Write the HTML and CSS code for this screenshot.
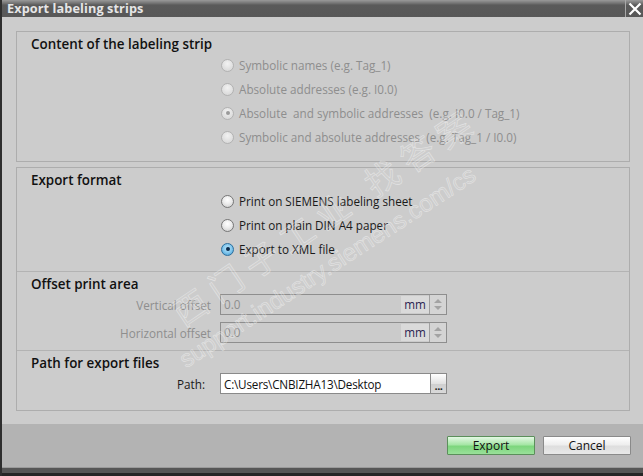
FILE: index.html
```html
<!DOCTYPE html>
<html>
<head>
<meta charset="utf-8">
<link rel="stylesheet" href="styles.css">
</head>
<body>
<div class="window">
  <div class="titlebar">
    <span class="title">Export labeling strips</span>
    <div class="close">
      <svg width="14" height="14" viewBox="0 0 14 14"><path d="M1.5 1.5 L12.5 12.5 M12.5 1.5 L1.5 12.5" stroke="#ffffff" stroke-width="2.2" fill="none"/></svg>
    </div>
  </div>
  <div class="content">
    <div class="group g1">
      <div class="heading">Content of the labeling strip</div>
      <div class="options">
        <div class="opt disabled"><span class="radio"></span><span>Symbolic names (e.g. Tag_1)</span></div>
        <div class="opt disabled"><span class="radio"></span><span>Absolute addresses (e.g. I0.0)</span></div>
        <div class="opt disabled"><span class="radio checked"></span><span>Absolute&nbsp; and symbolic addresses&nbsp; (e.g. I0.0 / Tag_1)</span></div>
        <div class="opt disabled"><span class="radio"></span><span>Symbolic and absolute addresses&nbsp; (e.g. Tag_1 / I0.0)</span></div>
      </div>
    </div>
    <div class="group g2">
      <div class="sec sec-format">
        <div class="heading">Export format</div>
        <div class="options">
          <div class="opt"><span class="radio"></span><span>Print on SIEMENS labeling sheet</span></div>
          <div class="opt"><span class="radio"></span><span>Print on plain DIN A4 paper</span></div>
          <div class="opt"><span class="radio checked"></span><span>Export to XML file</span></div>
        </div>
      </div>
      <div class="sec sec-offset">
        <div class="heading">Offset print area</div>
        <div class="field-row">
          <span class="label disabled-text">Vertical offset</span>
          <div class="spinfield">
            <span class="value">0.0</span>
            <span class="unit">mm</span>
            <span class="spin"><span class="up"></span><span class="down"></span></span>
          </div>
        </div>
        <div class="field-row">
          <span class="label disabled-text">Horizontal offset</span>
          <div class="spinfield">
            <span class="value">0.0</span>
            <span class="unit">mm</span>
            <span class="spin"><span class="up"></span><span class="down"></span></span>
          </div>
        </div>
      </div>
      <div class="sec sec-path">
        <div class="heading">Path for export files</div>
        <div class="field-row">
          <span class="label path-label">Path:</span>
          <div class="pathfield"><span class="value">C:\Users\CNBIZHA13\Desktop</span></div>
          <span class="browse">...</span>
        </div>
      </div>
    </div>
  </div>
  <div class="footer">
    <button class="btn btn-export">Export</button>
    <button class="btn btn-cancel">Cancel</button>
  </div>
  <div class="bottombar"></div>
  <div class="watermark wm-cn">西门子工业 找答案</div>
  <div class="watermark wm-url">support.industry.siemens.com/cs</div>
</div>
</body>
</html>
```

FILE: styles.css
```css
* { box-sizing: border-box; }
html, body { margin: 0; padding: 0; }
body {
  width: 643px;
  height: 476px;
  overflow: hidden;
  font-family: "Open Sans", "Noto Sans", sans-serif;
  background: #cccccc;
}
.window {
  position: relative;
  width: 643px;
  height: 476px;
  border-left: 2px solid #2e2e2e;
  display: flex;
  flex-direction: column;
  overflow: hidden;
}
.titlebar {
  height: 17px;
  background: linear-gradient(#9a9a9a 0px, #6a6a6a 4px, #5a5a5a 5px, #585858 17px);
  display: flex;
  align-items: center;
  justify-content: space-between;
  padding-left: 5px;
}
.title {
  color: #e6e6e6;
  font-weight: 700;
  font-size: 12.7px;
  line-height: 17px;
  letter-spacing: 0.1px;
}
.close {
  width: 18px;
  height: 17px;
  border-left: 1px solid #a8a8a8;
  display: flex;
  align-items: center;
  justify-content: center;
  padding-left: 1px;
}
.content {
  background: #cccccc;
  height: 407px;
  padding: 14px 13px 0 14px;
  display: flex;
  flex-direction: column;
  gap: 5px;
}
.group {
  border: 1px solid #adadad;
}
.g1 {
  height: 131px;
  padding: 3px 0 0 0;
}
.g2 {
  height: 244px;
  display: flex;
  flex-direction: column;
}
.heading {
  font-size: 13.4px;
  font-weight: 600;
  color: #111;
  line-height: 18px;
  padding-left: 14px;
}
.options {
  margin-left: 204px;
  display: flex;
  flex-direction: column;
}
.opt {
  height: 24px;
  display: flex;
  align-items: center;
  gap: 5px;
  font-size: 11.7px;
  color: #1a1a1a;
  white-space: nowrap;
}
.opt.disabled { color: #8e8e8e; }
.radio {
  width: 13px;
  height: 13px;
  border-radius: 50%;
  border: 1px solid #777;
  background: radial-gradient(circle at 50% 35%, #ffffff 0%, #ececec 45%, #c8c8c8 100%);
  flex: none;
  position: relative;
}
.opt.disabled .radio {
  border-color: #b2b2b2;
  background: radial-gradient(circle at 50% 35%, #f2f2f2 0%, #e2e2e2 50%, #d2d2d2 100%);
}
.radio.checked {
  border-color: #2c6e9c;
  background: radial-gradient(circle at 50% 40%, #bfe6fa 0%, #7cc4ec 55%, #3a8fc8 100%);
}
.radio.checked::after {
  content: "";
  position: absolute;
  left: 3.5px;
  top: 3.5px;
  width: 4px;
  height: 4px;
  border-radius: 50%;
  background: #0b2a4a;
}
.opt.disabled .radio.checked {
  border-color: #b2b2b2;
  background: radial-gradient(circle at 50% 35%, #f2f2f2 0%, #e2e2e2 50%, #d2d2d2 100%);
}
.opt.disabled .radio.checked::after { background: #9a9a9a; }

.sec-format {
  height: 104px;
  padding-top: 3px;
  border-bottom: 1px solid #b3b3b3;
}
.sec-offset {
  height: 79px;
  padding-top: 3px;
  border-bottom: 1px solid #b3b3b3;
  display: flex;
  flex-direction: column;
}
.sec-offset .heading { margin-bottom: 1px; }
.sec-offset .field-row + .field-row { margin-top: 7px; }
.sec-path {
  flex: 1;
  padding-top: 3px;
  display: flex;
  flex-direction: column;
}
.sec-path .heading { margin-bottom: 1px; }
.field-row {
  display: flex;
  align-items: center;
  height: 21px;
}
.label {
  width: 194px;
  text-align: right;
  font-size: 11.7px;
  margin-right: 9px;
  white-space: nowrap;
  color: #1a1a1a;
}
.disabled-text { color: #8e8e8e; }
.path-label { padding-right: 6px; }
.spinfield {
  width: 227px;
  height: 21px;
  border: 1px solid #8e8e8e;
  background: #cbcbcb;
  display: flex;
  align-items: stretch;
}
.spinfield .value {
  flex: 1;
  font-size: 11.7px;
  color: #8e8e8e;
  padding-left: 3px;
  line-height: 19px;
}
.unit {
  width: 28px;
  background: #dadada;
  font-size: 11.7px;
  color: #2a2450;
  text-align: center;
  line-height: 17px;
  margin: 1px 0;
}
.spin {
  width: 17px;
  border-left: 1px solid #a0a0a0;
  background: #d4d4d4;
  display: flex;
  flex-direction: column;
  align-items: center;
  justify-content: center;
  gap: 3px;
}
.up {
  width: 0; height: 0;
  border-left: 4px solid transparent;
  border-right: 4px solid transparent;
  border-bottom: 4px solid #a3a3a3;
}
.down {
  width: 0; height: 0;
  border-left: 4px solid transparent;
  border-right: 4px solid transparent;
  border-top: 4px solid #a3a3a3;
}
.pathfield {
  width: 211px;
  height: 21px;
  border: 1px solid #8a8a8a;
  background: #ffffff;
  display: flex;
  align-items: center;
}
.pathfield .value {
  font-size: 11.7px;
  color: #111;
  padding-left: 3px;
  white-space: nowrap;
  letter-spacing: -0.2px;
}
.browse {
  width: 16px;
  height: 21px;
  border: 1px solid #8a8a8a;
  border-left: none;
  background: linear-gradient(#ffffff, #e2e2e2 50%, #cfcfcf 51%, #d9d9d9);
  font-size: 11px;
  font-weight: 700;
  color: #222;
  display: flex;
  align-items: flex-end;
  justify-content: center;
  line-height: 14px;
  letter-spacing: -0.5px;
}
.footer {
  height: 43px;
  background: #b3b3b3;
  display: flex;
  justify-content: flex-end;
  align-items: flex-start;
  gap: 8px;
  padding: 12px 12px 0 0;
}
.btn {
  width: 88px;
  height: 19px;
  font-family: "Open Sans", "Noto Sans", sans-serif;
  font-size: 12px;
  color: #111;
  padding: 0;
  line-height: 16px;
  border-radius: 1px;
}
.btn-export {
  border: 1px solid #5b8f5b;
  background: linear-gradient(#e4f8e4 0%, #a6e6a6 45%, #7dd67d 55%, #9ae09a 100%);
}
.btn-cancel {
  border: 1px solid #8a8a8a;
  background: linear-gradient(#ffffff 0%, #eeeeee 45%, #dedede 55%, #e8e8e8 100%);
}
.bottombar {
  height: 9px;
  background: linear-gradient(#9a9a9a 0px, #9a9a9a 1px, #565656 1px, #565656 6px, #262626 6px);
}
.watermark {
  position: absolute;
  color: rgba(255, 255, 255, 0.08);
  -webkit-text-stroke: 0.6px rgba(255, 255, 255, 0.45);
  white-space: nowrap;
  transform-origin: 0 0;
  pointer-events: none;
}
.wm-cn {
  left: 160px;
  top: 296px;
  font-size: 34px;
  line-height: 48px;
  letter-spacing: 9px;
  transform: rotate(-34deg);
  font-family: "Noto Sans CJK SC", sans-serif;
}
.wm-url {
  left: 172px;
  top: 350px;
  font-size: 24px;
  transform: rotate(-33deg);
  font-family: "Liberation Sans", sans-serif;
}
```
